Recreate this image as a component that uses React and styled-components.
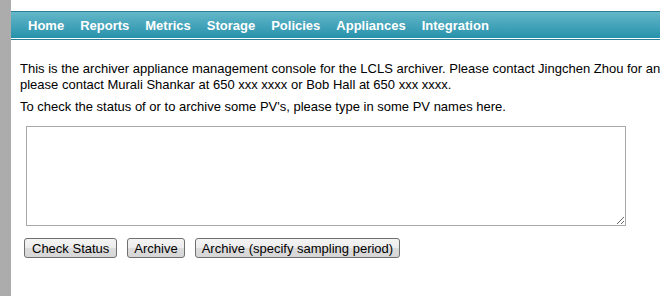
import React from "react";
import styled, { createGlobalStyle } from "styled-components";

const Global = createGlobalStyle`
  html, body { margin: 0; padding: 0; background: #fff; overflow: hidden; }
  body { font-family: "Liberation Sans", Arial, sans-serif; }
`;

const Page = styled.div`
  display: flex;
  width: 660px;
  height: 296px;
  overflow: hidden;
`;

const Sidebar = styled.div`
  flex: 0 0 11px;
  background: #acacac;
`;

const Main = styled.div`
  flex: 1;
  min-width: 0;
  padding-top: 11px;
`;

const Nav = styled.ul`
  display: flex;
  align-items: center;
  margin: 0;
  padding: 0 0 0 9px;
  list-style: none;
  height: 27px;
  border-top: 1px solid #2b7f97;
  border-bottom: 1px solid #2b7f97;
  box-shadow: inset 0 -1px 0 #ffffff;
  background: linear-gradient(#64b7c9, #2490aa);
`;

const NavItem = styled.li`
  padding: 0 8px;
  line-height: 15px;
  color: #fff;
  font-weight: bold;
  font-size: 13px;
  white-space: nowrap;
`;

const Content = styled.div`
  padding: 21px 0 0 9px;
  font-size: 13px;
  color: #000;
`;

const Para = styled.p`
  margin: 0 0 6px;
  line-height: 16px;
  white-space: nowrap;
`;

const Area = styled.textarea`
  display: block;
  box-sizing: border-box;
  margin: 11px 0 0 6px;
  width: 600px;
  height: 100px;
  border: 1px solid #a9a9a9;
  border-radius: 0;
  padding: 2px;
  font: 13px "Liberation Mono", monospace;
`;

const Buttons = styled.div`
  display: flex;
  gap: 10px;
  margin: 12px 0 0 4px;
`;

const Button = styled.button`
  box-sizing: border-box;
  height: 20px;
  padding: 0 ${(p) => (p.$wide ? 7 : 6)}px;
  border: 1px solid #707070;
  border-radius: 3px;
  background: linear-gradient(#f4f4f4 0%, #ececec 50%, #dcdcdc 51%, #d6d6d6 100%);
  font: 13px "Liberation Sans", Arial, sans-serif;
  color: #000;
  white-space: nowrap;
`;

const navItems = ["Home", "Reports", "Metrics", "Storage", "Policies", "Appliances", "Integration"];

export default function App() {
  return (
    <Page>
      <Global />
      <Sidebar />
      <Main>
        <Nav>
          {navItems.map((n) => (
            <NavItem key={n}>{n}</NavItem>
          ))}
        </Nav>
        <Content>
          <Para>
            This is the archiver appliance management console for the LCLS archiver. Please contact Jingchen Zhou for any questions;
            <br />
            please contact Murali Shankar at 650 xxx xxxx or Bob Hall at 650 xxx xxxx.
          </Para>
          <Para>To check the status of or to archive some PV's, please type in some PV names here.</Para>
          <Area />
          <Buttons>
            <Button $wide>Check Status</Button>
            <Button>Archive</Button>
            <Button>Archive (specify sampling period)</Button>
          </Buttons>
        </Content>
      </Main>
    </Page>
  );
}
